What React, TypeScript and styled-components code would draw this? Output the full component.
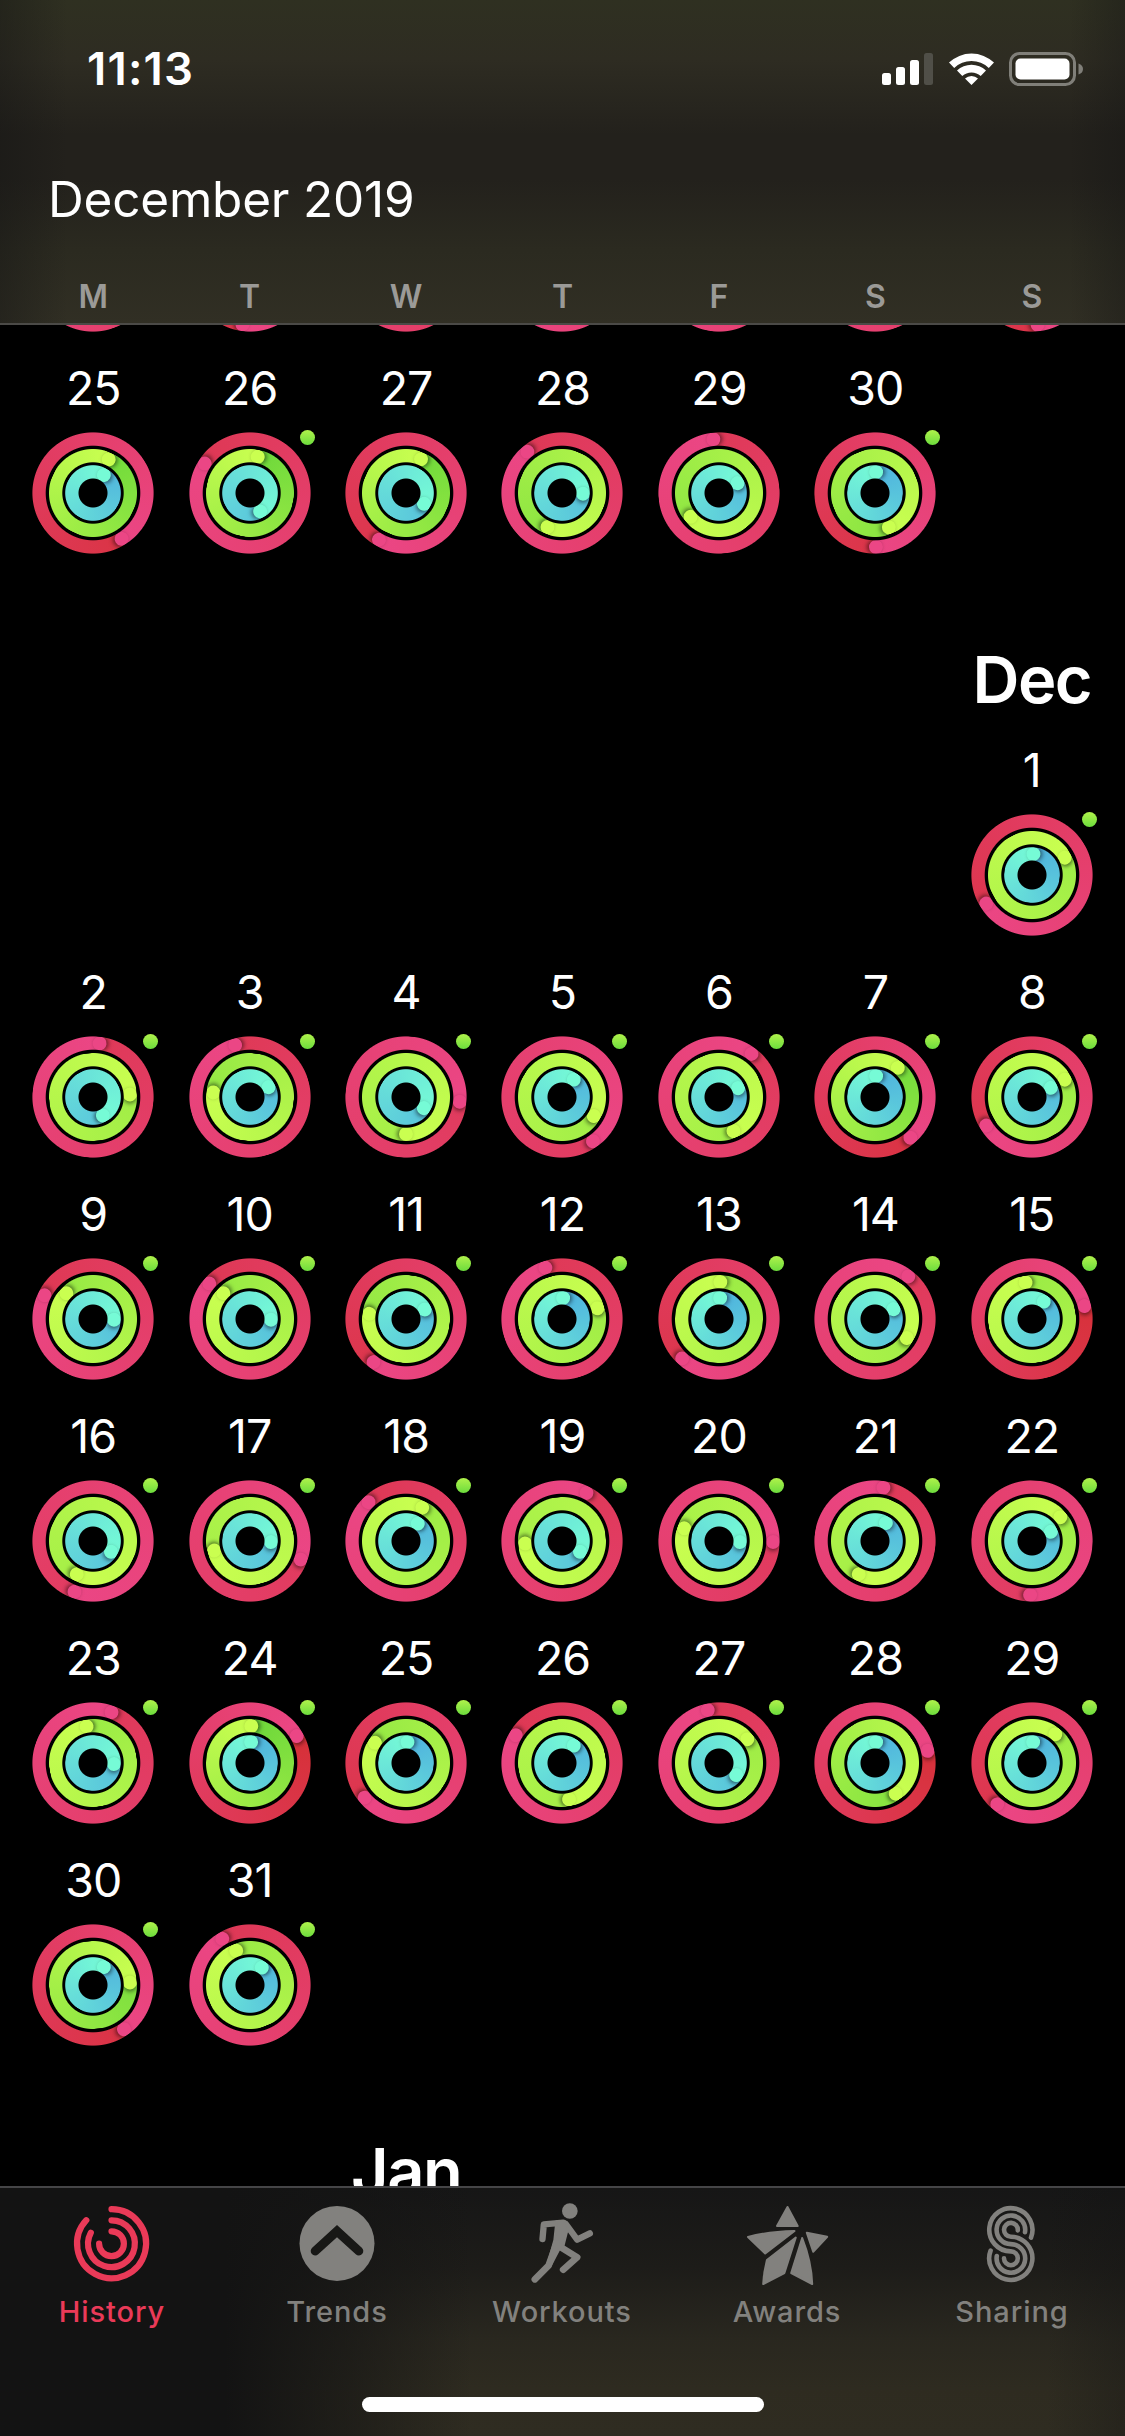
import styled, { createGlobalStyle } from 'styled-components';

interface DayData {
  day: number;
  move: number;
  exercise: number;
  stand: number;
  award: boolean;
}

interface RingSpec {
  size: number;
  radius: number;
  from: number[];
  to: number[];
}

// ring values are total degrees travelled, 360 = goal reached once
const d = (day: number, move: number, exercise: number, stand: number, award = true): DayData => ({
  day, move, exercise, stand, award,
});

const WEEKDAYS = ['M', 'T', 'W', 'T', 'F', 'S', 'S'];

// week that is scrolled under the header, only the bottom of its rings shows
const SCROLLED_WEEK: DayData[] = [
  d(18, 700, 700, 400, false),
  d(19, 548, 700, 400, false),
  d(20, 760, 700, 400, false),
  d(21, 600, 700, 400, false),
  d(22, 640, 700, 400, false),
  d(23, 700, 700, 400, false),
  d(24, 534, 700, 400, false),
];

const NOVEMBER: (DayData | null)[][] = [
  [
    d(25, 508, 385, 391, false),
    d(26, 663, 372, 511),
    d(27, 570, 384, 481, false),
    d(28, 680, 563, 452, false),
    d(29, 714, 590, 422, false),
    d(30, 539, 518, 363),
    null,
  ],
];

const DECEMBER: (DayData | null)[][] = [
  [null, null, null, null, null, null, d(1, 598, 782, 364)],
  [
    d(2, 727, 806, 512),
    d(3, 704, 637, 422),
    d(4, 815, 900, 482),
    d(5, 865, 841, 394),
    d(6, 757, 877, 425),
    d(7, 499, 398, 363),
    d(8, 598, 782, 424),
  ],
  [
    d(9, 656, 674, 452),
    d(10, 671, 674, 452),
    d(11, 577, 638, 423),
    d(12, 702, 793, 363),
    d(13, 583, 722, 363),
    d(14, 758, 841, 422),
    d(15, 436, 710, 394),
  ],
  [
    d(16, 920, 926, 481),
    d(17, 830, 975, 453),
    d(18, 676, 746, 394),
    d(19, 747, 986, 481),
    d(20, 811, 1010, 453),
    d(21, 729, 926, 391),
    d(22, 902, 770, 424),
  ],
  [
    d(23, 740, 710, 453),
    d(24, 420, 362, 363),
    d(25, 590, 663, 364),
    d(26, 661, 889, 394),
    d(27, 708, 770, 485),
    d(28, 437, 506, 363),
    d(29, 580, 759, 363),
  ],
  [d(30, 505, 446, 391), d(31, 689, 698, 394), null, null, null, null, null],
];

const RINGS: Record<'move' | 'exercise' | 'stand', RingSpec> = {
  move: { size: 122, radius: 60.6, from: [211, 44, 42], to: [235, 70, 133] },
  exercise: { size: 88, radius: 44, from: [107, 215, 58], to: [202, 255, 80] },
  stand: { size: 56, radius: 27.8, from: [78, 176, 222], to: [118, 251, 214] },
};

const GlobalStyle = createGlobalStyle`
  body {
    margin: 0;
    background: #000;
  }

  * {
    box-sizing: border-box;
  }
`;

const Screen = styled.div`
  display: flex;
  flex-direction: column;
  width: 1125px;
  height: 2436px;
  overflow: hidden;
  background: #000;
  color: #fff;
  font-family: Inter, "Liberation Sans", sans-serif;
`;

const Header = styled.header`
  display: flex;
  flex-direction: column;
  flex: none;
  height: 325px;
  border-bottom: 2px solid #4b4a47;
  background:
    linear-gradient(90deg, rgba(20, 20, 20, 0.4), transparent 6%, transparent 95%, rgba(20, 20, 20, 0.35)),
    linear-gradient(180deg, #2f3021 0, #2e2c22 60px, #23211c 135px, #23211c 180px, #2b2a20 250px, #312f24 323px);
`;

const StatusBar = styled.div`
  display: flex;
  align-items: flex-start;
  justify-content: space-between;
  height: 140px;
  padding: 42px 42px 0 87px;
`;

const Clock = styled.div`
  font-size: 45.5px;
  font-weight: 600;
  line-height: 54px;
  letter-spacing: 1.2px;
`;

const StatusIcons = styled.svg`
  width: 204px;
  height: 36px;
  margin-top: 9px;
`;

const MonthTitle = styled.h1`
  margin: 26px 0 0 48px;
  font-size: 49.5px;
  font-weight: 400;
  line-height: 66px;
  letter-spacing: -0.2px;
`;

const Weekdays = styled.div`
  display: grid;
  grid-template-columns: repeat(7, 1fr);
  margin-top: 45px;
  padding: 0 15px;
  color: #9b9a97;
  font-size: 32px;
  font-weight: 600;
  line-height: 40px;
  text-align: center;
`;

const Calendar = styled.main`
  flex: 1;
  min-height: 0;
  overflow: hidden;
`;

const Weeks = styled.div`
  margin-top: -115px;
`;

const Week = styled.div<{ $ringsOnly?: boolean }>`
  display: grid;
  grid-template-columns: repeat(7, 1fr);
  height: ${p => (p.$ringsOnly ? 122 : 222)}px;
  padding: 0 15px;
`;

const MonthRow = styled(Week)`
  height: 160px;
  align-items: end;
`;

const MonthLabel = styled.h2<{ $column: number }>`
  grid-column: ${p => p.$column};
  justify-self: center;
  margin: 0;
  font-size: 65px;
  font-weight: 600;
  line-height: 69px;
  letter-spacing: -1.6px;
`;

const DayCell = styled.div`
  display: flex;
  flex-direction: column;
  align-items: center;
  justify-content: flex-end;
`;

const DayNumber = styled.div`
  margin-bottom: 16px;
  font-size: 46.5px;
  line-height: 56px;
  letter-spacing: -1px;
`;

const RingStack = styled.div`
  position: relative;
  display: grid;
  place-items: center;
  width: 122px;
  height: 122px;
`;

const RingTrack = styled.div<{ $size: number; $radius: number }>`
  grid-area: 1 / 1;
  display: grid;
  justify-items: center;
  align-items: start;
  width: ${p => p.$size}px;
  height: ${p => p.$size}px;
  mask-image: radial-gradient(
    circle,
    transparent ${p => p.$radius - 13.8}px,
    #000 ${p => p.$radius - 12.8}px,
    #000 ${p => p.$radius - 0.5}px,
    transparent ${p => p.$radius + 0.5}px
  );
`;

const RingCap = styled.div`
  width: 14px;
  height: 14px;
  border-radius: 50%;
  box-shadow: 2px 0 4px rgba(0, 0, 0, 0.5);
`;

const AwardDot = styled.div`
  position: absolute;
  top: -2px;
  left: 111px;
  width: 15px;
  height: 15px;
  border-radius: 50%;
  background: linear-gradient(#b0f24b, #6cdc3d);
`;

const TabBar = styled.nav`
  flex: none;
  display: flex;
  flex-direction: column;
  justify-content: space-between;
  height: 250px;
  padding-bottom: 24px;
  border-top: 2px solid #454547;
  background:
    linear-gradient(90deg, #131313 20%, rgba(19, 19, 19, 0.55) 31%, transparent 42%, transparent 93%, rgba(19, 19, 19, 0.3)),
    linear-gradient(180deg, #161616, #1d1c19 80px, #29271f 150px, #2e2b20 200px, #2f2c21);
`;

const Tabs = styled.div`
  display: grid;
  grid-template-columns: repeat(5, 1fr);
  padding-top: 14px;
`;

const Tab = styled.div<{ $active?: boolean }>`
  display: flex;
  flex-direction: column;
  align-items: center;
  color: ${p => (p.$active ? '#ea3a58' : '#82817e')};
`;

const TabIcon = styled.svg`
  width: 84px;
  height: 84px;
`;

const TabLabel = styled.span`
  margin-top: 8px;
  padding-right: 1px;
  font-size: 29px;
  font-weight: 500;
  line-height: 36px;
  letter-spacing: 0.9px;
`;

const HomeIndicator = styled.div`
  align-self: center;
  width: 402px;
  height: 15px;
  border-radius: 8px;
  background: #fff;
`;

const startColor = ({ from, to }: RingSpec, total: number) => {
  const part = (total - 360) / total;
  return `rgb(${from.map((c, i) => Math.round(c + (to[i] - c) * part)).join(',')})`;
};

function Ring({ spec, total }: { spec: RingSpec; total: number }) {
  const end = `rgb(${spec.to.join(',')})`;
  return (
    <RingTrack
      $size={spec.size}
      $radius={spec.radius}
      style={{
        transform: `rotate(${total % 360}deg)`,
        backgroundImage: `conic-gradient(${startColor(spec, total)}, ${end})`,
      }}
    >
      <RingCap style={{ backgroundColor: end }} />
    </RingTrack>
  );
}

function Day({ data, ringsOnly }: { data: DayData; ringsOnly?: boolean }) {
  return (
    <DayCell>
      {!ringsOnly && <DayNumber>{data.day}</DayNumber>}
      <RingStack>
        <Ring spec={RINGS.move} total={data.move} />
        <Ring spec={RINGS.exercise} total={data.exercise} />
        <Ring spec={RINGS.stand} total={data.stand} />
        {data.award && <AwardDot />}
      </RingStack>
    </DayCell>
  );
}

function Month({ weeks }: { weeks: (DayData | null)[][] }) {
  return (
    <>
      {weeks.map((week, i) => (
        <Week key={i}>
          {week.map((data, j) => (data ? <Day key={j} data={data} /> : <DayCell key={j} />))}
        </Week>
      ))}
    </>
  );
}

const HistoryIcon = () => (
  <TabIcon viewBox="0 0 84 84" fill="none" stroke="currentColor" strokeWidth="6.2" strokeLinecap="round">
    <path d="M40.5 7.2A34.5 34.5 0 1 1 15.3 18.2" />
    <path d="M40.5 18.3A23.4 23.4 0 1 1 19.8 30.7" />
    <path d="M40.5 29.3A12.4 12.4 0 1 1 28.1 41.7" />
  </TabIcon>
);

const TrendsIcon = () => (
  <TabIcon viewBox="0 0 84 84" fill="none">
    <circle cx="41" cy="41.4" r="37.5" fill="currentColor" />
    <path d="M19.2 49L41 29.2L62.8 49" stroke="#181816" strokeWidth="9" strokeLinecap="round" />
  </TabIcon>
);

const WorkoutsIcon = () => (
  <TabIcon viewBox="61.5 66 252 252" fill="none" stroke="currentColor" strokeLinecap="round" strokeLinejoin="round">
    <circle cx="208" cy="93" r="23.5" fill="currentColor" stroke="none" />
    <path d="M126 177L130 133L188 128" strokeWidth="19" />
    <path d="M196 132L230 179L268 160" strokeWidth="19" />
    <path d="M168 124H194L203 140L189 196L178 204L150 258L142 252L162 180Z" fill="currentColor" strokeWidth="7" />
    <path d="M178 200L230 232L188 269" strokeWidth="20" />
    <path d="M168 190L144 257L103 298" strokeWidth="20" />
  </TabIcon>
);

const AwardsIcon = () => (
  <TabIcon viewBox="0 0 84 84" fill="currentColor" stroke="currentColor" strokeWidth="2" strokeLinejoin="round">
    <path d="M41.500 5L51.700 24H31Z" />
    <path d="M2 35Q22 29.500 48.500 29L19.200 51.500Z" />
    <path d="M60.800 30.800L81.200 34.800L67.200 49.800Z" />
    <path d="M49.800 35.500L38.400 71L17.200 82Q17.800 70 20.900 58Z" />
    <path d="M56.200 36L45.200 71L66.200 82Q65.600 60 56.200 36Z" />
  </TabIcon>
);

const SharingIcon = () => (
  <TabIcon viewBox="0.600 0 84 84" fill="none" stroke="currentColor" strokeWidth="4.600" strokeLinecap="round">
    <path d="M60.600 35.600A21.600 21.600 0 1 0 40.500 49.400A6.900 6.900 0 1 1 33.600 56.300" />
    <path d="M54.600 30.200A14.300 14.300 0 1 0 40.500 42.100A14.300 14.300 0 1 1 26.400 54" />
    <path d="M47.400 28.400A6.900 6.900 0 1 0 40.500 34.700A21.600 21.600 0 1 1 20.200 48.600" />
  </TabIcon>
);

const TABS = [
  { label: 'History', icon: <HistoryIcon />, active: true },
  { label: 'Trends', icon: <TrendsIcon /> },
  { label: 'Workouts', icon: <WorkoutsIcon /> },
  { label: 'Awards', icon: <AwardsIcon /> },
  { label: 'Sharing', icon: <SharingIcon /> },
];

export function App() {
  return (
    <Screen>
      <GlobalStyle />
      <Header>
        <StatusBar>
          <Clock>11:13</Clock>
          <StatusIcons viewBox="0 0 204 36" fill="#fff">
            <rect x="3" y="22" width="9" height="12" rx="2.500" />
            <rect x="17" y="16" width="9" height="18" rx="2.500" />
            <rect x="31" y="9" width="9" height="25" rx="2.500" />
            <rect x="45" y="2" width="9" height="32" rx="2.500" fill="#504f48" />
            <path d="M70 11.600A32.500 32.500 0 0 1 115 11.600L109.800 17A25 25 0 0 0 75.200 17Z" />
            <path d="M78 19.600A21 21 0 0 1 107 19.600L101.700 25A13.500 13.500 0 0 0 83.300 25Z" />
            <path d="M86 27.600A9.500 9.500 0 0 1 99 27.600L92.500 34Z" />
            <rect x="131.500" y="2.500" width="64" height="31" rx="9" fill="none" stroke="#807f79" strokeWidth="3" />
            <rect x="136.500" y="7.500" width="54" height="21" rx="5" />
            <path d="M199.500 12.500Q204 14 204 18T199.500 23.500Z" fill="#807f79" />
          </StatusIcons>
        </StatusBar>
        <MonthTitle>December 2019</MonthTitle>
        <Weekdays>
          {WEEKDAYS.map((name, i) => (
            <span key={i}>{name}</span>
          ))}
        </Weekdays>
      </Header>

      <Calendar>
        <Weeks>
          <Week $ringsOnly>
            {SCROLLED_WEEK.map(data => (
              <Day key={data.day} data={data} ringsOnly />
            ))}
          </Week>
          <Month weeks={NOVEMBER} />
          <MonthRow>
            <MonthLabel $column={7}>Dec</MonthLabel>
          </MonthRow>
          <Month weeks={DECEMBER} />
          <MonthRow>
            <MonthLabel $column={3}>Jan</MonthLabel>
          </MonthRow>
        </Weeks>
      </Calendar>

      <TabBar>
        <Tabs>
          {TABS.map(({ label, icon, active }) => (
            <Tab key={label} $active={active}>
              {icon}
              <TabLabel>{label}</TabLabel>
            </Tab>
          ))}
        </Tabs>
        <HomeIndicator />
      </TabBar>
    </Screen>
  );
}

export default App;
